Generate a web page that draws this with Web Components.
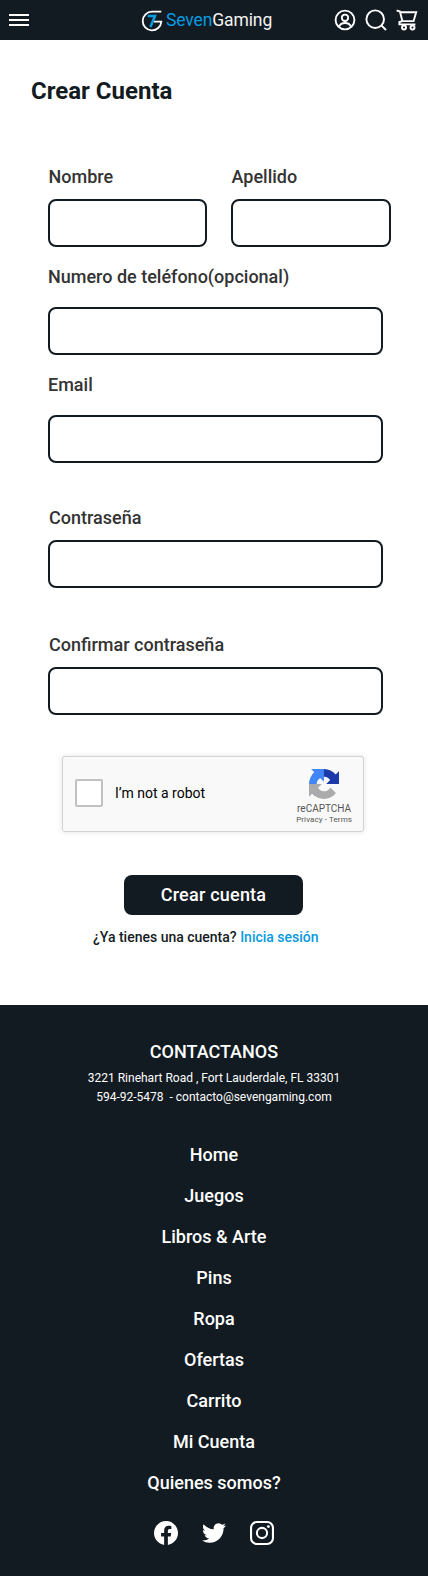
<!DOCTYPE html>
<html lang="es">
<head>
<meta charset="utf-8">
<title>SevenGaming - Crear Cuenta</title>
<style>
body{margin:0;background:#fff;font-family:Roboto,sans-serif;--ink:#131b22;--blue:#089ae0}
</style>
</head>
<body>
<seven-page></seven-page>
<script>
const define=(name,html)=>{
  const t=document.createElement('template');t.innerHTML=html;
  customElements.define(name,class extends HTMLElement{
    constructor(){super();this.attachShadow({mode:'open'}).append(t.content.cloneNode(true));}
  });
};

define('seven-logo',`<style>
:host{display:flex;align-items:center}
svg{display:block;margin-right:3px}
span{font-size:17.5px;line-height:21px;font-weight:400;letter-spacing:-.12px;color:#f4f4f4}
b{font-weight:400;color:var(--blue)}
</style>
<svg width="22" height="22" viewBox="0 0 22 22" fill="none"><path d="M20.3 1.7H11A9.3 9.3 0 1 0 20.3 11.7H13" stroke="#fff" stroke-width="1.8"/><path d="M6.7 5.9H14L9.4 17" stroke="#0a9be3" stroke-width="2.5"/></svg>
<span><b>Seven</b>Gaming</span>`);

define('seven-header',`<style>
:host{display:grid;grid-template-columns:132px auto 1fr;align-items:center;height:40px;box-sizing:border-box;padding:0 10px 0 9px;background:var(--ink)}
svg{display:block}
.tools{display:flex;justify-content:flex-end;gap:9px}
seven-logo{padding:1px 0 0 0}
</style>
<svg width="20" height="12" viewBox="0 0 20 12"><path d="M0 1H20M0 6H20M0 11H20" stroke="#fff" stroke-width="2"/></svg>
<seven-logo></seven-logo>
<div class="tools">
<svg width="22" height="22" viewBox="0 0 22 22" fill="none" stroke="#fff" stroke-width="1.9"><circle cx="11" cy="11" r="9.4"/><circle cx="11" cy="8.8" r="3.2"/><path d="M4.9 17.8C6 15.3 8.2 14 11 14s5 1.3 6.1 3.8"/></svg>
<svg width="22" height="22" viewBox="0 0 22 22" fill="none" stroke="#fff" stroke-width="1.9"><circle cx="10.2" cy="10.2" r="8.8"/><path d="M16.3 16.3L21 21"/></svg>
<svg width="22" height="22" viewBox="0 0 22 22" fill="none" stroke="#fff" stroke-width="1.9"><path d="M.6 1.5L3.9 2.4L6.4 12.1H17.6L20.2 3.3H4.3M6.4 12.1L3.4 13V15.4H19.4"/><circle cx="8" cy="18.5" r="2"/><circle cx="16.5" cy="18.5" r="2"/></svg>
</div>`);

define('form-field',`<style>
:host{display:flex;flex-direction:column;gap:var(--gap,12px)}
label{font-size:18px;line-height:21px;font-weight:500;color:#333;padding-left:var(--indent,0)}
input{display:block;width:100%;height:48px;box-sizing:border-box;border:2px solid var(--ink);border-radius:8px;background:#fff;margin:0;padding:0 12px;font:16px Roboto,sans-serif}
</style><label><slot></slot></label><input>`);

define('robot-check',`<style>
:host{display:flex;align-items:center;justify-content:space-between;box-sizing:border-box;width:302px;height:76px;border:1px solid #d3d3d3;border-radius:3px;background:#f9f9f9;box-shadow:0 0 4px 1px rgba(0,0,0,.08);padding:0 11px 0 12px;color:#000}
.check{display:flex;align-items:center;gap:12px;font-size:14px;line-height:16px;padding-bottom:2px}
i{width:24px;height:24px;border:2px solid #c1c1c1;border-radius:2px;background:#fff}
.brand{display:flex;flex-direction:column;align-items:center;color:#555;font-size:10px;line-height:12px;padding-top:6px}
.brand svg{display:block;margin-bottom:4px}
small{font-size:8px;line-height:10px;letter-spacing:.1px}
</style>
<div class="check"><i></i><span>I’m not a robot</span></div>
<div class="brand"><svg width="30" height="30" viewBox="0 0 64 64"><path d="M64 31.955l-.033-1.37V4.687l-7.16 7.16C50.948 4.674 42.033.093 32.05.093c-10.4 0-19.622 4.96-25.458 12.64l11.736 11.86a15.55 15.55 0 0 1 4.754-5.334c2.05-1.6 4.952-2.906 8.968-2.906.485 0 .86.057 1.135.163 4.976.393 9.288 3.14 11.828 7.124l-8.307 8.307L64 31.953" fill="#1c3aa9"/><path d="M31.862.094l-1.37.033H4.594l7.16 7.16C4.58 13.147 0 22.06 0 32.046c0 10.4 4.96 19.622 12.64 25.458L24.5 45.768a15.55 15.55 0 0 1-5.334-4.754c-1.6-2.05-2.906-4.952-2.906-8.968 0-.485.057-.86.163-1.135.393-4.976 3.14-9.288 7.124-11.828l8.307 8.307L31.86.095" fill="#4285f4"/><path d="M.001 32.045l.033 1.37v25.898l7.16-7.16c5.86 7.173 14.774 11.754 24.76 11.754 10.4 0 19.622-4.96 25.458-12.64l-11.736-11.86a15.55 15.55 0 0 1-4.754 5.334c-2.05 1.6-4.952 2.906-8.968 2.906-.485 0-.86-.057-1.135-.163-4.976-.393-9.288-3.14-11.828-7.124l8.307-8.307c-10.522.04-22.4.066-27.295-.005" fill="#ababab"/></svg><span>reCAPTCHA</span><small>Privacy - Terms</small></div>`);

define('signup-form',`<style>
:host{display:block;height:965px;box-sizing:border-box;padding-top:37px}
h1{margin:0 0 61px 31px;font-size:24px;line-height:28px;font-weight:700;color:var(--ink)}
form{margin:0 45px 0 48px;display:flex;flex-direction:column}
.names{--indent:.5px;display:grid;grid-template-columns:159px 160px;gap:24px;margin-bottom:19px}
.wide{--gap:20px;margin-bottom:19px}
.pass{--indent:1px}
button{display:block;margin:43px 0 0 76px;width:179px;height:40px;border:0;border-radius:8px;padding:0 0 2px;background:var(--ink);color:#fff;font:500 18px/21px Roboto,sans-serif;letter-spacing:.22px}
p{margin:14px 0 0 45px;font-size:14px;line-height:16px;font-weight:500;color:var(--ink);white-space:nowrap}
a{color:var(--blue);text-decoration:none}
</style>
<h1>Crear Cuenta</h1>
<form>
<div class="names"><form-field>Nombre</form-field><form-field>Apellido</form-field></div>
<form-field class="wide">Numero de teléfono(opcional)</form-field>
<form-field class="wide" style="margin-bottom:44px">Email</form-field>
<form-field class="pass" style="margin-bottom:46px">Contraseña</form-field>
<form-field class="pass">Confirmar contraseña</form-field>
<robot-check style="margin:41px 0 0 14px"></robot-check>
<button type="button">Crear cuenta</button>
<p>¿Ya tienes una cuenta? <a href="#">Inicia sesión</a></p>
</form>`);

define('seven-footer',`<style>
:host{display:flex;flex-direction:column;align-items:center;box-sizing:border-box;height:571px;padding-top:36px;background:var(--ink);color:#fff;text-align:center}
h2{margin:0 0 7px;font-size:18px;line-height:21px;font-weight:500}
address{font-style:normal;font-size:12px;line-height:19px;white-space:pre}
nav{display:flex;flex-direction:column;gap:20px;margin:37px 0 28px;font-size:18px;line-height:21px;font-weight:500}
.social{display:flex;gap:24px}
svg{display:block}
</style>
<h2>CONTACTANOS</h2>
<address>3221 Rinehart Road , Fort Lauderdale, FL 33301
594-92-5478  - contacto@sevengaming.com</address>
<nav><span>Home</span><span>Juegos</span><span>Libros &amp; Arte</span><span>Pins</span><span>Ropa</span><span>Ofertas</span><span>Carrito</span><span>Mi Cuenta</span><span>Quienes somos?</span></nav>
<div class="social">
<svg width="24" height="24" viewBox="0 0 24 24" fill="#fff"><path d="M24 12.073c0-6.627-5.373-12-12-12s-12 5.373-12 12c0 5.99 4.388 10.954 10.125 11.854v-8.385H7.078v-3.47h3.047V9.43c0-3.007 1.792-4.669 4.533-4.669 1.312 0 2.686.235 2.686.235v2.953H15.83c-1.491 0-1.956.925-1.956 1.874v2.25h3.328l-.532 3.47h-2.796v8.385C19.612 23.027 24 18.062 24 12.073z"/></svg>
<svg width="24" height="24" viewBox="0 0 24 24" fill="#fff"><path d="M23.953 4.57a10 10 0 01-2.825.775 4.958 4.958 0 002.163-2.723c-.951.555-2.005.959-3.127 1.184a4.92 4.92 0 00-8.384 4.482C7.69 8.095 4.067 6.13 1.64 3.162a4.822 4.822 0 00-.666 2.475c0 1.71.87 3.213 2.188 4.096a4.904 4.904 0 01-2.228-.616v.06a4.923 4.923 0 003.946 4.827 4.996 4.996 0 01-2.212.085 4.936 4.936 0 004.604 3.417 9.867 9.867 0 01-6.102 2.105c-.39 0-.779-.023-1.17-.067a13.995 13.995 0 007.557 2.209c9.053 0 13.998-7.496 13.998-13.985 0-.21 0-.42-.015-.63A9.935 9.935 0 0024 4.59z"/></svg>
<svg width="24" height="24" viewBox="0 0 24 24" fill="none" stroke="#fff" stroke-width="2.1"><rect x="1.05" y="1.05" width="21.9" height="21.9" rx="5.8"/><circle cx="12" cy="12" r="5.1"/><circle cx="18.4" cy="5.6" r="1.45" fill="#fff" stroke="none"/></svg>
</div>`);

define('seven-page',`<style>:host{display:block;width:428px;margin:0 auto;background:#fff}</style>
<seven-header></seven-header><signup-form></signup-form><seven-footer></seven-footer>`);
</script>
</body>
</html>
